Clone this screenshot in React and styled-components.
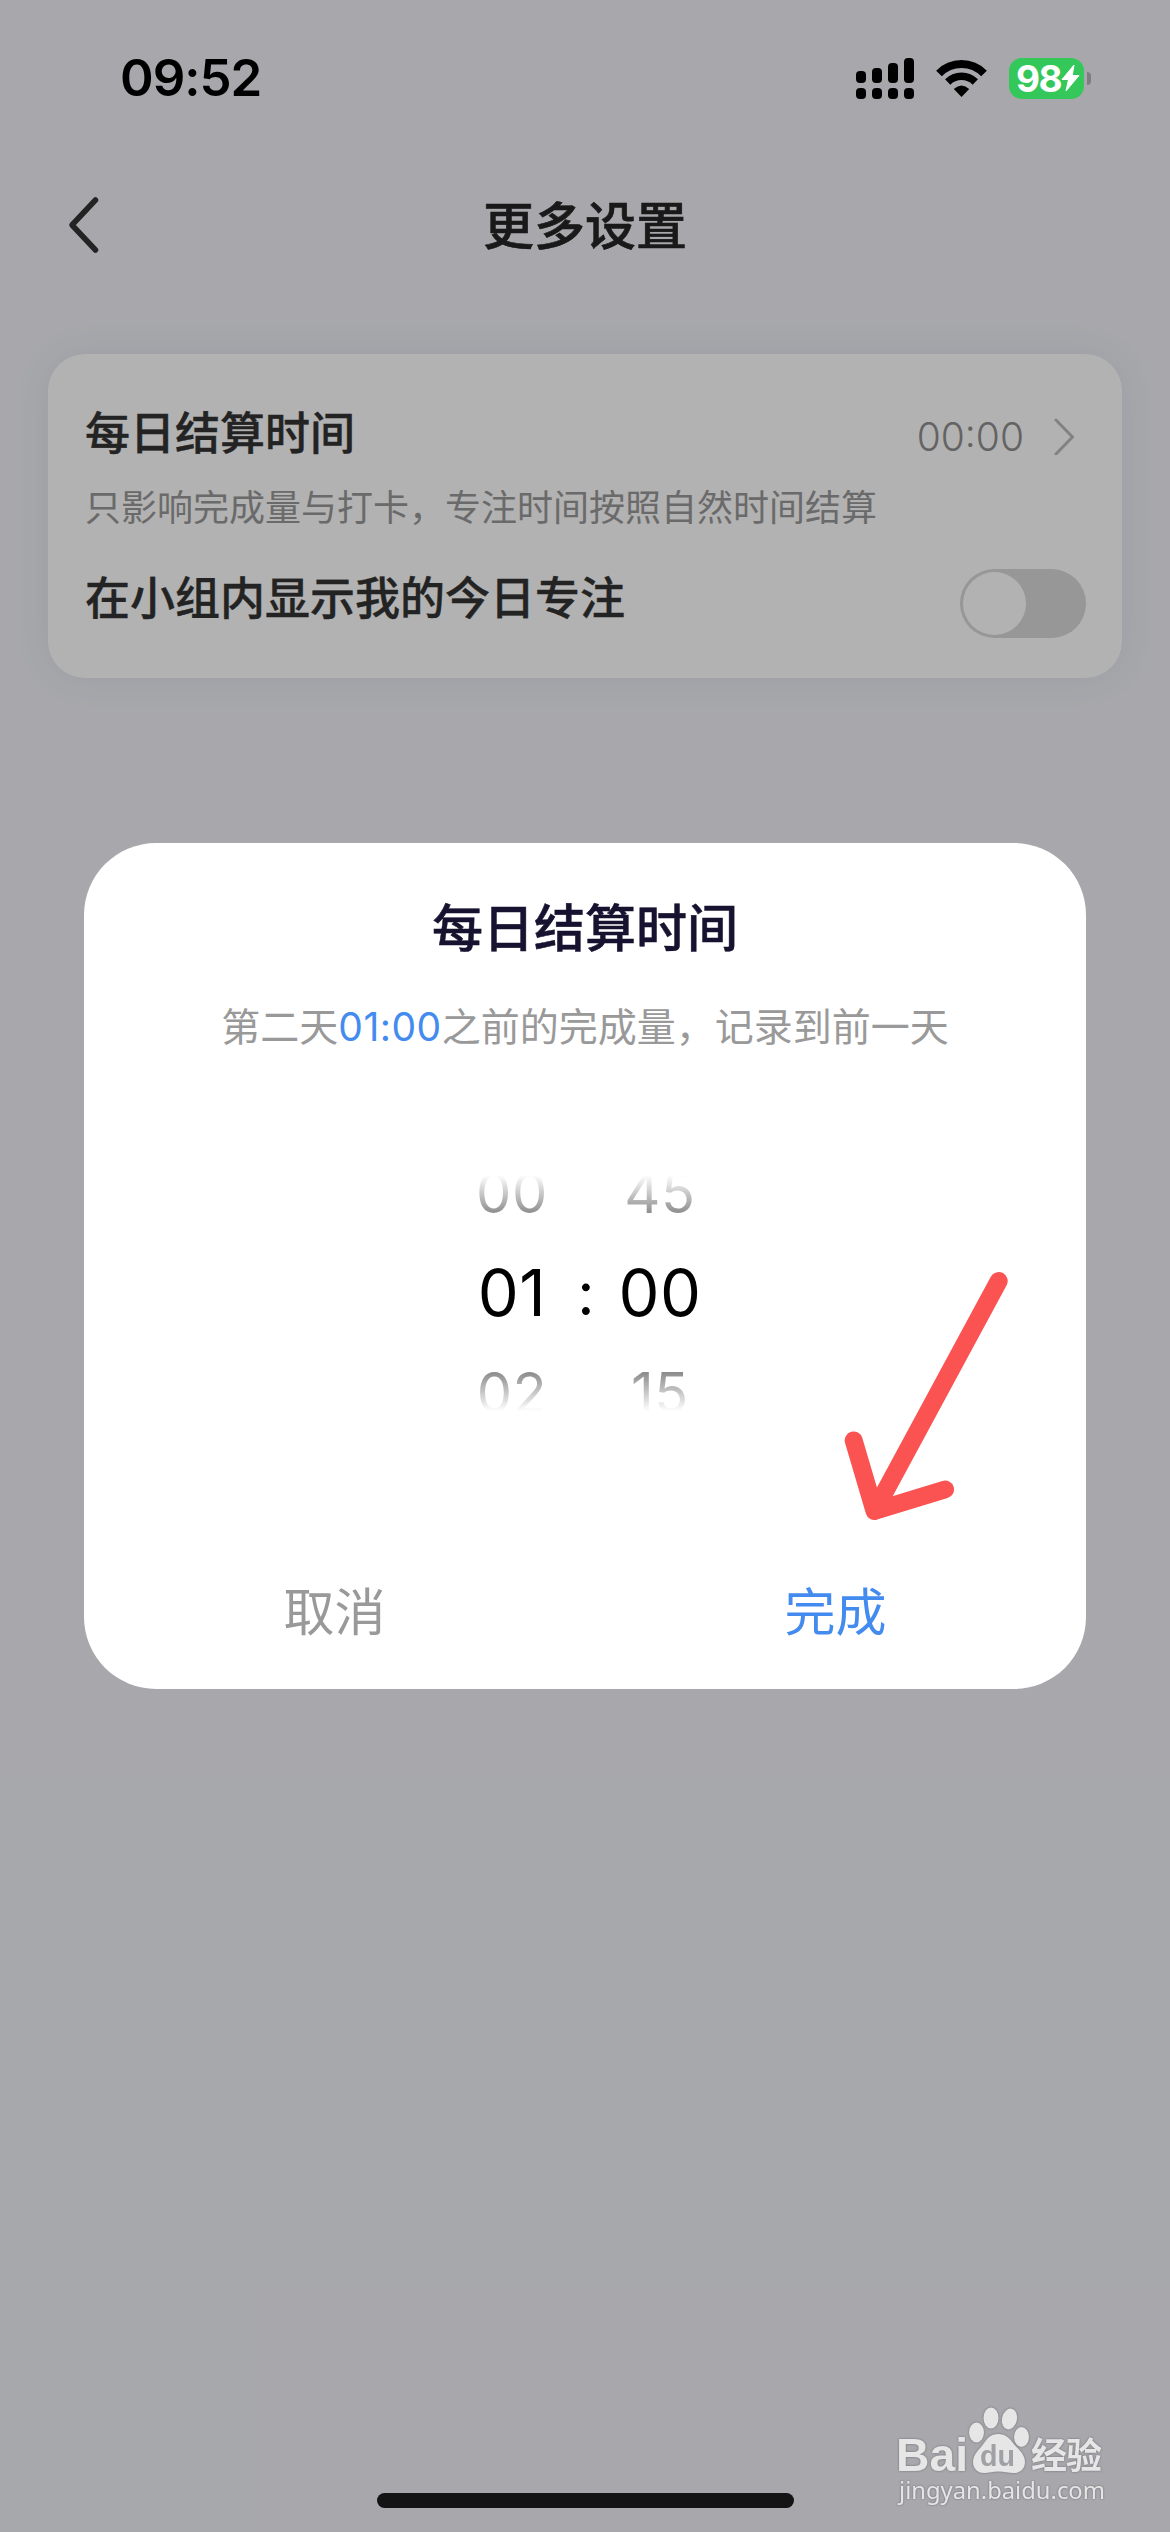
import styled, { createGlobalStyle } from "styled-components";

const GlobalStyle = createGlobalStyle`
  * {
    box-sizing: border-box;
  }

  body {
    margin: 0;
    background: #eff0f6;
    font-family: "Inter", "Noto Sans CJK SC", sans-serif;
  }
`;

const Page = styled.div`
  display: flex;
  flex-direction: column;
  width: 1170px;
  height: 2532px;
  overflow: hidden;
  background: #eff0f6;
`;

const StatusBar = styled.div`
  position: relative;
  z-index: 2;
  display: flex;
  justify-content: space-between;
  align-items: center;
  height: 156px;
  padding: 0 79px 0 120px;
`;

const Clock = styled.div`
  font-size: 51px;
  font-weight: 600;
  line-height: 60px;
  letter-spacing: -1px;
`;

const StatusIcons = styled.div`
  display: flex;
  align-items: center;
`;

const Wifi = styled.svg`
  margin: 0 21px 0 22px;
`;

const Battery = styled.div`
  display: flex;
  align-items: center;
  width: 75px;
  height: 41px;
  padding-left: 7px;
  border-radius: 13px;
  background: #34c759;
  color: #fff;
  font-size: 37px;
  font-weight: 700;
  letter-spacing: -1.5px;
`;

const BatteryCap = styled.div`
  width: 4px;
  height: 13px;
  margin-left: 3px;
  border-radius: 0 4px 4px 0;
  background: #7d7e82;
`;

const Header = styled.div`
  display: grid;
  grid-template-columns: 160px 1fr 160px;
  align-items: center;
  height: 138px;
`;

const BackIcon = styled.svg`
  margin-left: 66px;
`;

const HeaderTitle = styled.div`
  padding-top: 4px;
  text-align: center;
  font-size: 51px;
  font-weight: 500;
  line-height: 60px;
  color: #252525;
  -webkit-text-stroke: 0.6px;
`;

const Card = styled.div`
  height: 324px;
  margin: 60px 48px 0;
  padding: 50px 36px 0 37px;
  border-radius: 37px;
  background: #fff;
  box-shadow: 0 0 36px rgba(80, 80, 130, 0.08);
`;

const Row = styled.div`
  display: flex;
  justify-content: space-between;
  height: 60px;
  margin-top: ${(props) => props.$top || 0}px;
`;

const Label = styled.div`
  font-size: 45px;
  font-weight: 500;
  line-height: 60px;
  color: #333;
  -webkit-text-stroke: 0.4px;
`;

const Note = styled.div`
  margin-top: 19px;
  font-size: 36px;
  line-height: 50px;
  color: #999;
`;

const Value = styled.div`
  display: flex;
  align-items: center;
  gap: 28px;
  padding: 4px 10px 0 0;
  font-size: 39px;
  font-weight: 350;
  color: #8e8e8e;
`;

const Toggle = styled.div`
  width: 126px;
  height: 69px;
  padding: 3px;
  border-radius: 35px;
  background: #d8d8d8;
`;

const Knob = styled.div`
  width: 63px;
  height: 63px;
  border-radius: 50%;
  background: #fff;
`;

const Overlay = styled.div`
  position: absolute;
  top: 0;
  left: 0;
  z-index: 1;
  display: flex;
  align-items: center;
  justify-content: center;
  width: 1170px;
  height: 2532px;
  background: rgba(0, 0, 0, 0.3);
`;

const Modal = styled.div`
  display: flex;
  flex-direction: column;
  width: 1002px;
  height: 846px;
  padding-top: 56px;
  border-radius: 72px;
  background: #fff;
`;

const ModalTitle = styled.div`
  text-align: center;
  font-size: 51px;
  font-weight: 500;
  line-height: 60px;
  color: #17122f;
  -webkit-text-stroke: 0.5px;
`;

const ModalText = styled.div`
  margin-top: 43px;
  text-align: center;
  font-size: 39px;
  line-height: 50px;
  color: #999;

  span {
    color: #438bef;
    letter-spacing: 0.5px;
  }
`;

const Picker = styled.div`
  display: grid;
  grid-template-columns: 122px 26px 122px;
  justify-content: center;
  align-items: center;
  height: 236px;
  margin-top: 123px;
  padding-left: 2px;
  overflow: hidden;
  mask-image: linear-gradient(
    transparent,
    #000 85px,
    #000 151px,
    transparent
  );
`;

const Wheel = styled.div`
  display: flex;
  flex-direction: column;
  justify-content: center;
  height: 236px;
`;

const WheelItem = styled.div`
  flex: none;
  height: 100px;
  line-height: 100px;
  text-align: center;
  font-size: ${(props) => (props.$active ? 65 : 56)}px;
  letter-spacing: ${(props) => (props.$active ? 0.5 : 0.6)}px;
  color: #000;
`;

const Colon = styled.div`
  text-align: center;
  font-size: 60px;
  line-height: 100px;
`;

const Buttons = styled.div`
  display: flex;
  margin-top: auto;
`;

const Button = styled.button`
  flex: 1;
  height: 158px;
  padding: 0 0 3px;
  border: 0;
  background: none;
  font-family: inherit;
  font-size: 51px;
  color: ${(props) => (props.$primary ? "#438bef" : "#999")};
`;

const Arrow = styled.svg`
  position: absolute;
  top: 1260px;
  left: 830px;
  z-index: 3;
`;

const Watermark = styled.svg`
  position: absolute;
  top: 2390px;
  left: 880px;
  z-index: 3;
  filter: drop-shadow(0 0 1px rgba(70, 70, 75, 0.6));
`;

const HomeIndicator = styled.div`
  position: relative;
  z-index: 2;
  width: 417px;
  height: 15px;
  margin: auto auto 24px;
  border-radius: 8px;
  background: #141414;
`;

const signal = [
  { x: 0, y: 13 },
  { x: 16, y: 10 },
  { x: 32, y: 5 },
  { x: 48, y: 0 },
];

const hours = ["00", "01", "02"];
const minutes = ["45", "00", "15"];

function TimeWheel({ items }) {
  return (
    <Wheel>
      {items.map((item, i) => (
        <WheelItem key={item} $active={i === 1}>
          {item}
        </WheelItem>
      ))}
    </Wheel>
  );
}

function App() {
  return (
    <Page>
      <GlobalStyle />
      <StatusBar>
        <Clock>09:52</Clock>
        <StatusIcons>
          <svg width="58" height="41" viewBox="0 0 58 41">
            {signal.map((bar) => (
              <g key={bar.x}>
                <rect x={bar.x} y={bar.y} width="10" height={25 - bar.y} rx="4" />
                <rect x={bar.x} y="30" width="10" height="11" rx="4" />
              </g>
            ))}
          </svg>
          <Wifi width="52" height="41" viewBox="936 57 52 41">
            <g fill="none" stroke="#000">
              <path d="M939 72.5a31.5 31.5 0 0 1 45 0" strokeWidth="8" />
              <path d="M947.7 81a19.5 19.5 0 0 1 27.6 0" strokeWidth="7.5" />
            </g>
            <path d="M953.8 88q7.7-7.2 15.4 0l-7.7 8z" />
          </Wifi>
          <Battery>
            98
            <svg width="19" height="28" viewBox="0 0 19 28">
              <path
                d="M13 1L1 15.5h6.5L5 27 18 11.5H11.2z"
                fill="#fff"
                stroke="#fff"
                strokeLinejoin="round"
              />
            </svg>
          </Battery>
          <BatteryCap />
        </StatusIcons>
      </StatusBar>

      <Header>
        <BackIcon width="36" height="60" viewBox="0 0 36 60" fill="none">
          <path
            d="M29.5 5L6 30l23.5 25"
            stroke="#333"
            strokeWidth="5.5"
            strokeLinecap="round"
            strokeLinejoin="round"
          />
        </BackIcon>
        <HeaderTitle>更多设置</HeaderTitle>
      </Header>

      <Card>
        <Row>
          <Label>每日结算时间</Label>
          <Value>
            00:00
            <svg width="24" height="38" viewBox="0 0 24 38" fill="none">
              <path
                d="M4 3l16.5 17L4 37"
                stroke="#bbb"
                strokeWidth="3"
                strokeLinecap="round"
                strokeLinejoin="round"
              />
            </svg>
          </Value>
        </Row>
        <Note>只影响完成量与打卡，专注时间按照自然时间结算</Note>
        <Row $top={36}>
          <Label>在小组内显示我的今日专注</Label>
          <Toggle>
            <Knob />
          </Toggle>
        </Row>
      </Card>

      <HomeIndicator />

      <Overlay>
        <Modal>
          <ModalTitle>每日结算时间</ModalTitle>
          <ModalText>
            第二天<span>01:00</span>之前的完成量，记录到前一天
          </ModalText>
          <Picker>
            <TimeWheel items={hours} />
            <Colon>:</Colon>
            <TimeWheel items={minutes} />
          </Picker>
          <Buttons>
            <Button>取消</Button>
            <Button $primary>完成</Button>
          </Buttons>
        </Modal>
      </Overlay>

      <Arrow width="190" height="270" viewBox="830 1260 190 270" fill="none">
        <path
          d="M998.7 1281L874.5 1511M853.7 1440.5L874.5 1511L945 1489.5"
          stroke="#fb5252"
          strokeWidth="18"
          strokeLinecap="round"
          strokeLinejoin="round"
        />
      </Arrow>

      <Watermark width="240" height="130" viewBox="0 0 240 130" fill="#e6e6e6">
        <text
          x="16"
          y="81"
          fontFamily="Liberation Sans"
          fontWeight="700"
          fontSize="47"
          textLength="72"
          lengthAdjust="spacingAndGlyphs"
        >
          Bai
        </text>
        <ellipse cx="96.5" cy="42.5" rx="7.5" ry="10" />
        <ellipse cx="111" cy="28" rx="7.5" ry="10.5" />
        <ellipse cx="129.5" cy="29" rx="7.5" ry="10.5" transform="rotate(12 129.5 29)" />
        <ellipse cx="141.5" cy="47" rx="7.5" ry="10" />
        <path d="M118.5 44c7 0 11 4 14.5 9s12 10 12 19c0 7-5 11-11 11-6 0-10-1.5-15.5-1.5S109 83 104 83c-7 0-11-5-11-11 0-8 7-13 11-19s7.5-9 14.5-9z" />
        <text
          x="100"
          y="76"
          fill="#a0a1a5"
          fontFamily="Liberation Sans"
          fontWeight="700"
          fontSize="30"
          textLength="35"
          lengthAdjust="spacingAndGlyphs"
        >
          du
        </text>
        <text
          x="151"
          y="79"
          fontFamily="Noto Sans CJK SC"
          fontWeight="700"
          fontSize="36"
          textLength="71"
        >
          经验
        </text>
        <text
          x="19"
          y="108.5"
          fontFamily="Noto Sans"
          fontSize="24"
          textLength="206"
          lengthAdjust="spacingAndGlyphs"
        >
          jingyan.baidu.com
        </text>
      </Watermark>
    </Page>
  );
}

export default App;
